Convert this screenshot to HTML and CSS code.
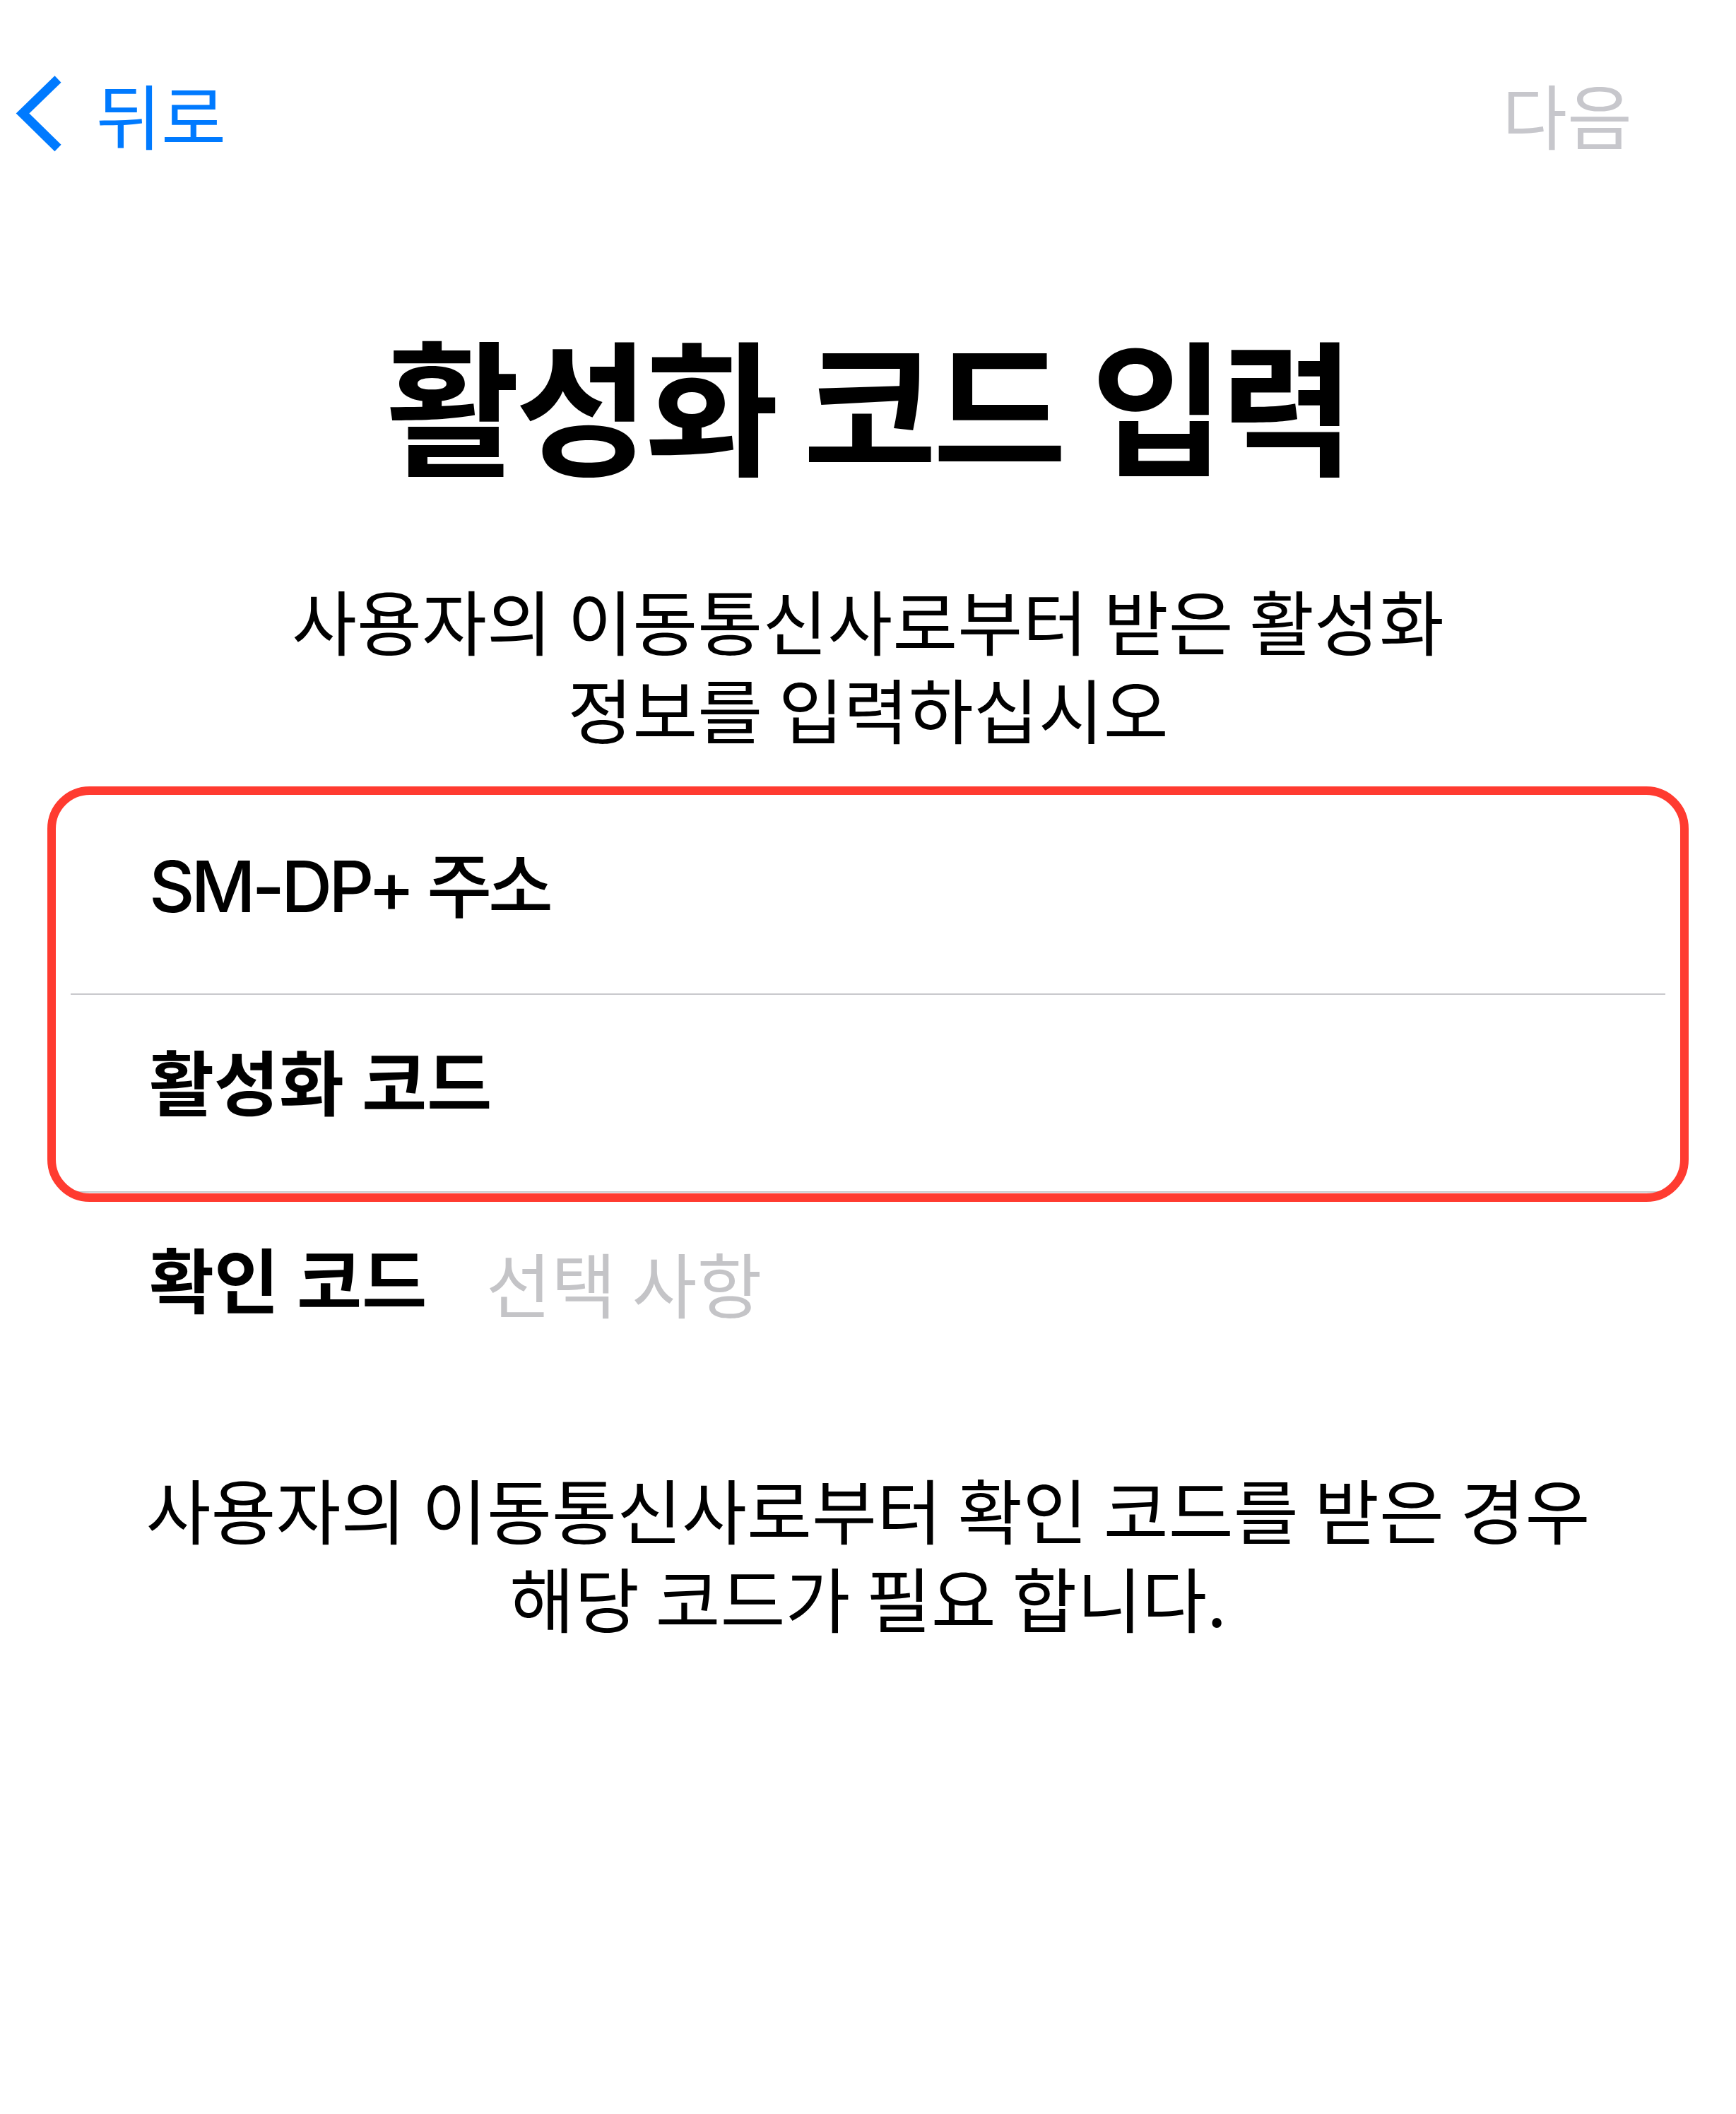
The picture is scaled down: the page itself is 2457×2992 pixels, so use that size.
FILE: index.html
```html
<html>

<head>
    <title>활성화 코드 입력</title>
    <link rel="stylesheet" href="styles.css">
</head>

<body>
    <div id="screen">
        <div class="nav">
            <a class="back">
                <svg class="chevron" width="74" height="110" viewBox="0 0 74 110">
                    <path d="M66 6 L16 54.5 L66 103.5" />
                </svg>
                <span>뒤로</span>
            </a>
            <span class="next">다음</span>
        </div>

        <h1 class="title">활성화 코드 입력</h1>
        <p class="lead">사용자의 이동통신사로부터 받은 활성화<br>정보를 입력하십시오</p>

        <div class="fields">
            <div class="group highlight">
                <label class="row">
                    <span class="label medium">SM-DP+ 주소</span>
                    <input class="address">
                </label>
                <label class="row">
                    <span class="label">활성화 코드</span>
                    <input class="activation">
                </label>
            </div>
            <label class="row">
                <span class="label">확인 코드</span>
                <input class="confirm" placeholder="선택 사항">
            </label>
        </div>

        <p class="note">사용자의 이동통신사로부터 확인 코드를 받은 경우<br>해당 코드가 필요 합니다.</p>
    </div>
</body>

</html>
```

FILE: styles.css
```css
body {
    margin: 0;
    background: #fff;
    color: #000;
    font-family: "Noto Sans CJK KR", sans-serif;
    font-size: 100px;
}

#screen {
    display: flex;
    flex-direction: column;
}

/* top bar */
.nav {
    display: flex;
    align-items: center;
    justify-content: space-between;
    height: 120px;
    line-height: 120px;
    padding: 101px 147px 0 16px;
}

.back {
    display: flex;
    align-items: center;
    gap: 46px;
    color: #007aff;
}

.chevron path {
    fill: none;
    stroke: #007aff;
    stroke-width: 13;
    stroke-linejoin: miter;
    stroke-linecap: butt;
}

.next {
    color: #c7c7cc;
}

/* heading */
.title {
    margin: 221px 0 0;
    font-size: 206px;
    font-weight: 700;
    line-height: 250px;
    letter-spacing: -0.03em;
    text-align: center;
}

.lead,
.note {
    margin: 0;
    line-height: 125px;
    text-align: center;
}

.lead {
    margin-top: 122px;
}

/* form rows */
.fields {
    margin: 64px 100px 0;
    display: flex;
    flex-direction: column;
}

.row {
    display: grid;
    grid-template-columns: 477px 1fr;
    align-items: center;
    height: 280px;
    box-sizing: border-box;
    padding: 64px 0 89px 111px;
    line-height: 125px;
    border-bottom: 2px solid #c8c8cc;
}

.fields > .row:last-child {
    border-bottom: none;
    padding-bottom: 91px;
}

.label {
    font-family: "Inter", "Noto Sans CJK KR", sans-serif;
    font-weight: 600;
    white-space: nowrap;
}

.label.medium {
    font-weight: 500;
    letter-spacing: -0.05em;
}

.row input {
    border: none;
    outline: none;
    padding: 0;
    background: transparent;
    font: inherit;
    letter-spacing: inherit;
    color: #000;
    min-width: 0;
}

.row input::placeholder {
    color: #c4c4c7;
}

/* red annotation frame round the first two rows */
.highlight {
    position: relative;
}

.highlight::after {
    content: "";
    position: absolute;
    top: -15px;
    bottom: -13px;
    left: -33px;
    right: -33px;
    border: 12px solid #ff3b30;
    border-radius: 60px;
    pointer-events: none;
}

.note {
    margin-top: 104px;
}
```
